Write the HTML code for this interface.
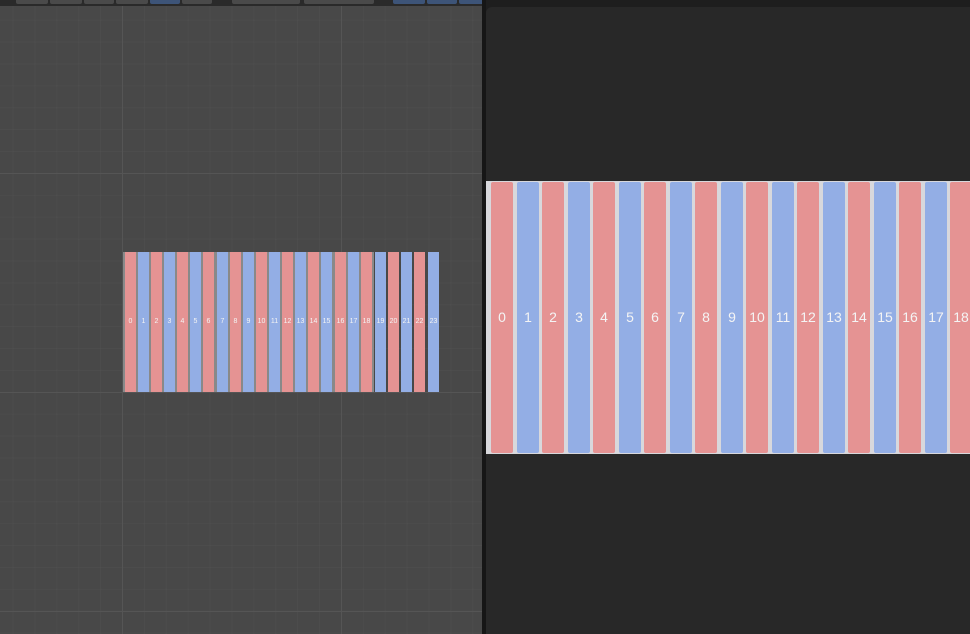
<!DOCTYPE html>
<html><head><style>
*{margin:0;padding:0;box-sizing:border-box}
body{width:970px;height:634px;overflow:hidden;background:#1e1e1e;position:relative;font-family:"Liberation Sans",sans-serif}
.lp{position:absolute;left:0;top:6px;width:482px;height:628px;background:#484848;
background-image:linear-gradient(#555 1px,transparent 1px),linear-gradient(90deg,#555 1px,transparent 1px),linear-gradient(rgba(255,255,255,.018) 1px,transparent 1px),linear-gradient(90deg,rgba(255,255,255,.018) 1px,transparent 1px);
background-size:219px 219px,219px 219px,21.9px 21.9px,21.9px 21.9px;background-position:122px -52px,122px 0,122px -52px,122px 0}
.tb{position:absolute;left:0;top:0;width:485px;height:6px;background:#2a2a2a}
.tb i{position:absolute;top:0;height:4px;background:#4a4a4a;border-radius:0 0 2px 2px}
.div{position:absolute;left:482px;top:0;width:4px;height:634px;background:#161616}
.rp{position:absolute;left:486px;top:7px;width:484px;height:627px;background:#282828;border-radius:6px 0 0 0}
.strip{position:absolute;background:#898989}
.b{position:absolute;color:#f4f4f4;text-align:center}
.l{top:252px;height:140px;width:11px;font-size:7px;line-height:140px}
.r{top:182px;height:271px;width:22px;font-size:14px;line-height:271px;border-radius:2px}
.p{background:#e59393}.u{background:#93aee5}
</style></head><body>
<div class="lp"></div>
<div class="tb"><i style="left:16px;width:32px"></i><i style="left:50px;width:32px"></i><i style="left:84px;width:30px"></i><i style="left:116px;width:32px"></i><i style="left:150px;width:30px;background:#3d5478"></i><i style="left:182px;width:30px"></i><i style="left:232px;width:68px"></i><i style="left:304px;width:70px"></i><i style="left:393px;width:32px;background:#3d5478"></i><i style="left:427px;width:30px;background:#3d5478"></i><i style="left:459px;width:26px;background:#3d5478"></i></div>
<div class="div"></div>
<div class="rp"></div>
<div class="strip" style="left:123px;top:252px;width:251px;height:140px"></div>
<div class="strip" style="left:486px;top:181px;width:484px;height:273px;background:#d8d8dc"></div>
<div class="b l p" style="left:125px">0</div><div class="b l u" style="left:138px">1</div><div class="b l p" style="left:151px">2</div><div class="b l u" style="left:164px">3</div><div class="b l p" style="left:177px">4</div><div class="b l u" style="left:190px">5</div><div class="b l p" style="left:203px">6</div><div class="b l u" style="left:217px">7</div><div class="b l p" style="left:230px">8</div><div class="b l u" style="left:243px">9</div><div class="b l p" style="left:256px">10</div><div class="b l u" style="left:269px">11</div><div class="b l p" style="left:282px">12</div><div class="b l u" style="left:295px">13</div><div class="b l p" style="left:308px">14</div><div class="b l u" style="left:321px">15</div><div class="b l p" style="left:335px">16</div><div class="b l u" style="left:348px">17</div><div class="b l p" style="left:361px">18</div><div class="b l u" style="left:375px">19</div><div class="b l p" style="left:388px">20</div><div class="b l u" style="left:401px">21</div><div class="b l p" style="left:414px">22</div><div class="b l u" style="left:428px">23</div>
<div class="b r p" style="left:491px">0</div><div class="b r u" style="left:517px">1</div><div class="b r p" style="left:542px">2</div><div class="b r u" style="left:568px">3</div><div class="b r p" style="left:593px">4</div><div class="b r u" style="left:619px">5</div><div class="b r p" style="left:644px">6</div><div class="b r u" style="left:670px">7</div><div class="b r p" style="left:695px">8</div><div class="b r u" style="left:721px">9</div><div class="b r p" style="left:746px">10</div><div class="b r u" style="left:772px">11</div><div class="b r p" style="left:797px">12</div><div class="b r u" style="left:823px">13</div><div class="b r p" style="left:848px">14</div><div class="b r u" style="left:874px">15</div><div class="b r p" style="left:899px">16</div><div class="b r u" style="left:925px">17</div><div class="b r p" style="left:950px">18</div>
</body></html>
